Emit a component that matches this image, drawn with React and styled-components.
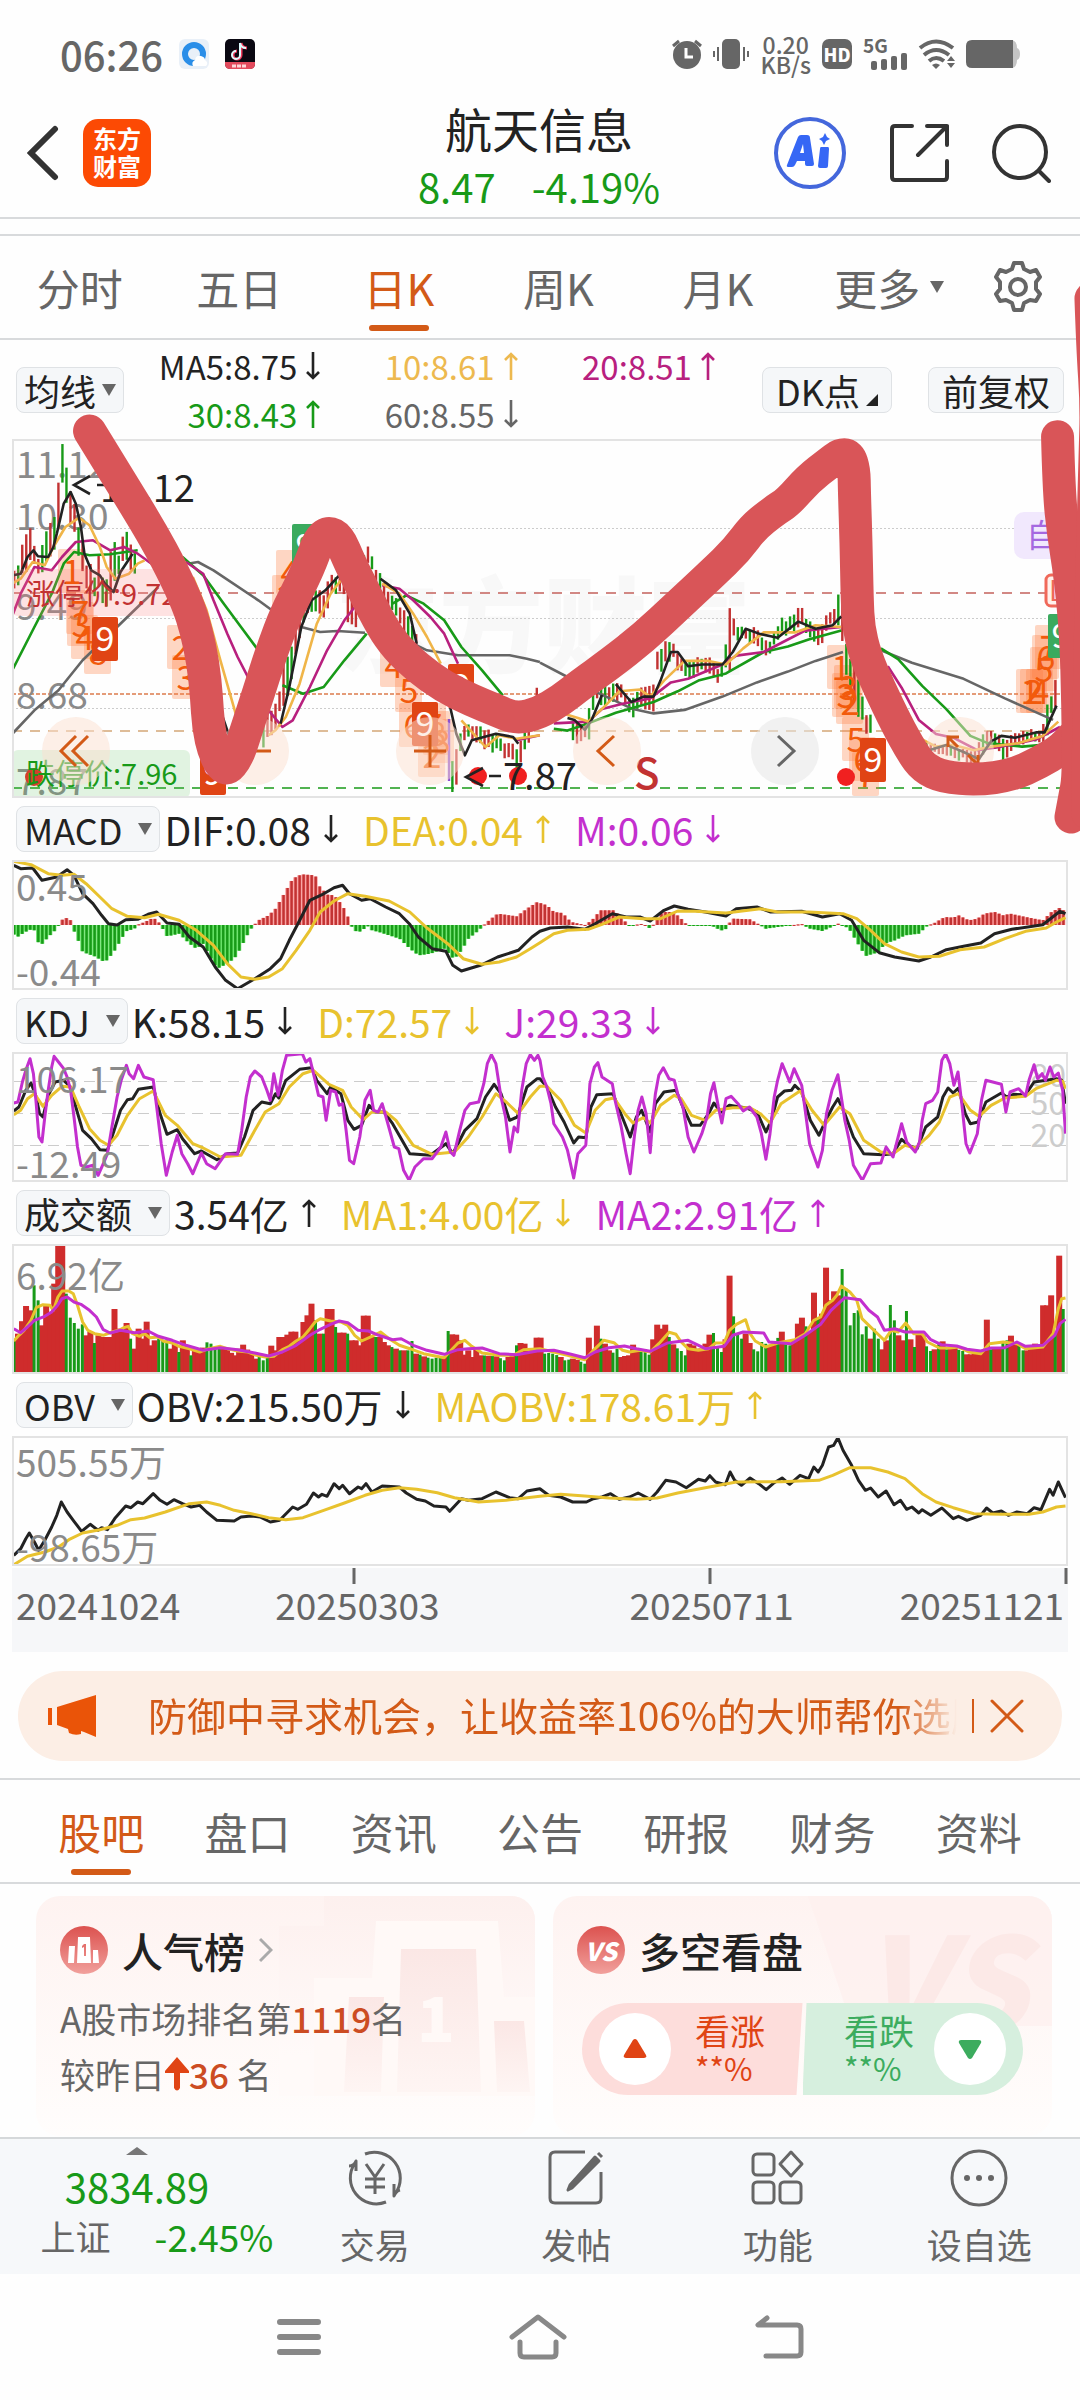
import React from 'react';
import styled, { createGlobalStyle } from 'styled-components';

const GlobalStyle = createGlobalStyle`
    *{
        box-sizing: border-box;
    }
    body{
        margin: 0;
        background: #fefefe;
        color: #222;
        font-family: "Noto Sans CJK SC", "Noto Sans", sans-serif;
    }
    button{
        font: inherit;
        color: inherit;
        background: none;
        border: 0;
        padding: 0;
        margin: 0;
        cursor: pointer;
    }
    h1, h2, p{
        margin: 0;
        font-weight: 400;
    }
    svg{
        display: block;
        flex: none;
    }
`;

const GREEN = '#189a18';
const RED = '#c23232';
const ORANGE = '#d35a17';
const YELLOW = '#e8c22e';
const PURPLE = '#c32fce';
const INK = '#222';

/* ---------- chart data ---------- */

// "x,y" pairs; a trailing g marks a falling day, | starts a new segment
const toPoints = (text, x0, y0, ky) =>
    text.trim().split(/\s+/).map(pair => {
        const [, x, y, g] = pair.match(/(\d+),(\d+)(g?)/);
        return { x: x0 + x / 2.904, y: y0 + y / ky, g: g === 'g' };
    });

const series = (left, right, y0, yRight = y0, kRight = 3) => [
    ...toPoints(left, 0, y0, 3),
    ...toPoints(right, 540, yRight, kRight),
];

const toPath = points => 'M' + points.map(p => `${p.x.toFixed(1)} ${p.y.toFixed(1)}`).join('L');

const toSmooth = points => {
    let d = `M${points[0].x} ${points[0].y}`;
    for (let i = 1; i < points.length - 1; i++) {
        const a = points[i];
        const b = points[i + 1];
        d += `Q${a.x} ${a.y} ${(a.x + b.x) / 2} ${(a.y + b.y) / 2}`;
    }
    const end = points[points.length - 1];
    return d + `L${end.x} ${end.y}`;
};

const valueAt = (points, x) => {
    if (x <= points[0].x) return points[0].y;
    for (let i = 1; i < points.length; i++) {
        const a = points[i - 1];
        const b = points[i];
        if (x <= b.x) return a.y + ((b.y - a.y) * (x - a.x)) / (b.x - a.x || 1);
    }
    return points[points.length - 1].y;
};

const noise = i => {
    const n = Math.sin(i * 12.9898) * 43758.5453;
    return n - Math.floor(n);
};

const DAYS = Array.from({ length: 262 }, (_, i) => ({ i, x: 14 + i * 4.02 }));

const macd = {
    dif: series(
        '40,205 60,215 95,213 122,250 165,240 195,218 215,235 240,290 270,320 295,355 315,380 340,384 365,368 400,367 430,352 455,345 485,378 520,382 550,420 590,450 625,510 655,550 690,575 740,545 785,515 815,485 840,430 865,380 900,310 935,293 970,272 995,265 1015,290 1050,310 1075,305 1120,330 1160,350 1190,382 1215,420 1255,455 1295,463 1315,505 1340,522 1400,503 1445,480 1505,460 1545,420 1568,403',
        '30,393 80,390 130,397 160,380 210,350 250,360 290,360 320,372 360,340 390,327 430,337 480,345 540,357 570,335 630,330 670,345 760,343 820,360 870,350 905,370 940,430 985,467 1030,480 1100,492 1135,480 1180,458 1230,448 1280,438 1320,410 1370,397 1460,383 1510,343 1526,350', -64),
    dea: series(
        '40,193 90,203 140,230 180,235 215,232 250,260 290,300 325,335 370,358 420,362 460,352 520,370 570,400 620,445 660,500 700,540 740,547 780,540 820,515 860,460 900,400 930,345 970,312 1010,290 1060,298 1130,312 1190,345 1240,393 1300,440 1345,485 1400,502 1450,495 1500,480 1540,455 1568,437',
        '40,410 80,400 140,397 180,382 230,360 300,365 350,365 400,342 450,343 540,348 640,335 690,345 780,345 880,350 920,365 960,400 1000,440 1050,465 1100,480 1160,478 1220,458 1290,450 1350,425 1410,403 1470,393 1500,375 1526,362', -64),
    bars: series(
        '40,412 50,420 65,410 85,398 100,400 110,435 120,443 140,420 160,400 170,384 178,370 190,362 205,370 212,395 225,425 240,465 280,480 295,492 310,490 330,465 350,430 365,403 390,395 400,383 420,375 445,362 460,375 475,400 485,418 520,410 550,440 570,455 590,440 610,480 630,515 650,505 680,485 695,460 710,430 725,400 738,384 750,370 780,355 800,335 825,290 850,245 875,232 915,235 925,265 950,293 970,295 990,320 1005,345 1018,384 1030,402 1050,404 1065,385 1080,400 1100,405 1160,425 1190,455 1215,475 1250,470 1290,455 1318,487 1340,460 1360,425 1390,400 1405,384 1420,370 1445,350 1500,358 1530,335 1560,315',
        '0,318 20,325 40,345 65,348 90,375 130,384 150,370 175,340 215,340 235,362 260,386 300,380 320,395 335,375 355,345 385,345 405,360 425,382 440,386 500,387 515,395 535,403 548,380 560,365 610,367 635,382 655,395 690,390 720,386 760,381 780,394 820,402 850,388 865,380 885,387 900,400 920,435 945,477 985,465 1000,440 1030,430 1060,415 1100,410 1125,386 1145,378 1175,360 1200,362 1215,355 1245,370 1270,365 1290,350 1320,345 1345,355 1365,350 1410,360 1460,370 1485,345 1510,332 1526,345', -64),
};

const kdj = {
    k: series(
        '40,942 55,930 75,880 90,858 105,900 115,950 125,960 140,895 160,855 185,850 205,870 220,930 240,1000 265,1025 290,1058 312,1060 330,1005 350,940 370,908 385,905 402,877 445,870 465,950 485,1012 515,998 530,1025 565,1070 585,1062 630,1088 660,1070 690,1068 710,1020 735,940 760,915 785,920 800,890 810,903 830,850 870,817 905,812 920,850 950,890 960,870 990,890 1010,970 1028,997 1050,985 1072,925 1090,945 1115,945 1140,980 1190,1070 1250,1075 1295,1040 1315,1070 1350,1000 1385,965 1410,900 1435,862 1455,890 1480,970 1502,960 1530,870 1560,845',
        '0,845 20,870 45,930 70,975 98,1038 112,1020 133,1022 148,930 165,893 212,890 235,950 262,1020 280,960 295,940 320,1005 335,920 360,885 395,880 415,930 440,985 465,985 490,950 505,918 525,945 550,925 600,933 630,945 656,1005 672,970 690,900 710,882 730,880 740,865 760,885 785,970 810,1015 830,970 850,930 865,905 885,950 910,1020 940,1070 995,1073 1025,1070 1050,1027 1070,1045 1095,1055 1120,990 1155,960 1170,900 1185,873 1200,888 1215,873 1235,950 1250,980 1272,975 1295,915 1340,888 1355,900 1375,892 1410,893 1435,855 1500,845 1515,850 1526,920', -256),
    d: series(
        '40,953 60,940 80,905 100,890 125,928 150,895 180,868 205,870 230,930 260,995 290,1030 315,1045 340,1015 370,955 405,905 445,882 480,955 515,985 560,1040 590,1053 640,1080 700,1075 740,1000 770,945 810,920 840,870 880,830 910,820 955,862 995,880 1020,930 1055,968 1080,945 1120,945 1150,970 1200,1045 1255,1072 1320,1065 1360,1020 1400,960 1440,890 1470,915 1505,950 1540,900 1568,868',
        '20,868 60,910 100,985 133,1008 160,940 190,908 215,903 250,955 270,978 300,962 320,978 350,925 390,895 410,905 440,955 480,970 510,940 560,932 610,932 640,950 668,978 700,920 755,882 790,940 825,985 870,930 900,950 940,1030 990,1065 1025,1070 1060,1045 1090,1053 1130,1015 1160,975 1190,900 1215,890 1250,940 1275,958 1310,925 1350,903 1410,898 1440,875 1500,850 1518,853 1526,875', -256),
    j: series(
        '40,918 52,915 65,855 75,820 87,785 97,830 105,920 113,1020 122,1035 130,960 140,880 150,810 157,778 170,795 185,815 195,840 205,880 215,960 225,1050 235,1105 250,1110 270,1105 285,1135 300,1100 312,1070 325,990 340,900 352,850 367,805 375,830 388,845 402,805 418,840 445,848 455,930 468,1040 483,1135 500,1065 515,1015 528,1070 545,1100 560,1130 585,1068 600,1100 625,1115 655,1070 690,1072 702,1000 715,900 727,840 740,822 760,840 775,880 785,910 795,830 808,895 820,820 832,775 878,770 888,795 900,785 915,850 925,895 938,900 947,970 960,880 975,885 985,925 995,920 1005,1000 1015,1090 1027,1100 1045,1020 1060,910 1075,880 1085,940 1098,945 1110,920 1125,975 1145,1050 1158,1055 1172,1120 1188,1150 1205,1110 1230,1085 1255,1085 1280,1050 1295,1005 1308,1065 1318,1075 1335,1000 1350,940 1365,920 1390,915 1405,860 1415,800 1427,773 1440,800 1455,900 1468,960 1481,1065 1493,990 1503,1005 1515,880 1528,800 1540,773 1552,790 1562,775',
        '0,790 8,840 20,870 32,920 40,980 65,1020 80,1060 98,1143 110,1070 133,1045 145,860 158,810 168,797 180,840 210,860 218,910 235,985 250,1070 262,1130 275,1010 285,940 296,900 308,950 320,1067 328,960 335,890 345,835 358,812 375,845 390,850 400,890 415,930 430,1020 447,1065 470,1010 485,960 495,890 505,857 518,930 528,978 540,905 555,898 575,920 590,942 608,930 630,960 643,1010 656,1087 668,1010 680,900 690,850 703,800 725,855 738,815 760,865 770,940 783,1040 807,1110 820,1060 832,950 848,880 865,833 875,900 885,970 898,1030 910,1105 936,1150 960,1100 990,1098 1005,1050 1025,1080 1050,980 1065,1035 1090,1065 1102,1035 1110,970 1120,920 1140,910 1155,885 1167,790 1178,770 1190,800 1202,865 1214,825 1225,920 1237,1040 1248,1068 1270,1010 1282,910 1295,850 1340,862 1353,945 1365,885 1390,875 1410,897 1420,850 1435,803 1445,845 1458,830 1468,850 1481,810 1492,840 1505,828 1518,880 1526,1010', -256),
};

const turnover = {
    bars: series(
        '40,462g 55,440 75,357 90,370 97,295g 108,340g 120,415 130,355 150,375 163,290 174,174 180,174 190,320g 202,392g 213,408g 225,425g 236,412g 248,445 260,435 272,468g 283,445 300,450 315,450 329,366 341,425 352,435 365,408 376,455g 388,485 400,425 411,455 423,404 435,475 445,460 457,455g 470,460g 480,460g 492,485 505,470 515,495g 527,460 540,485 560,505g 570,490 583,495 597,466g 608,470g 630,480g 650,480 680,505 703,473 730,500 740,515 755,510g 770,520g 780,510g 793,476 805,490 817,450 840,443 852,434 865,455 875,455 885,405 897,385 909,350 921,400g 933,440 945,440g 957,366 969,370 980,420g 992,437 1004,440g 1015,440g 1027,460 1040,475 1050,490 1062,386 1074,430g 1085,450 1100,450 1112,465 1125,475 1150,485 1165,490g 1180,490g 1200,462g 1213,500 1240,512g 1250,515g 1280,510g 1295,510 1305,432g 1318,442 1330,443 1342,460 1352,503 1364,490 1376,510 1388,485 1400,505 1440,508 1468,520g 1480,510 1492,505 1504,475g 1515,468 1527,470 1540,490 1550,490 1562,452',
        '0,452 12,500g 25,498g 40,500g 60,510 75,520g 85,518g 100,515 130,530g 143,452 155,490 167,416 179,455g 190,470 202,490 215,497g 225,485g 235,510 255,505 272,473 283,490 300,492g 318,503g 328,457 341,413 352,425 365,413 376,450g 388,472 400,484g 411,492g 422,505g 434,470 446,475 458,485 470,485 480,470 492,443 503,438g 515,480g 527,495g 538,457 550,266 562,388g 573,440g 585,455g 596,440 608,468 620,487g 631,493g 645,465g 665,475 680,470 702,434 714,472g 725,475g 735,460 747,410 759,392 771,418g 783,435 794,317 806,390g 818,380 829,242 841,340 852,313 864,325 875,246g 887,305g 899,415g 910,378g 922,370g 934,442g 945,418g 957,455 968,425g 980,455g 992,487 1003,460 1014,354g 1026,400g 1038,445 1050,460 1062,372g 1073,457 1085,480g 1096,440 1108,445 1120,478g 1132,492g 1145,487 1165,463 1185,487g 1200,482 1225,492g 1245,502 1275,500 1285,490 1293,398 1305,487g 1330,480 1352,460g 1364,446 1376,472 1388,474g 1400,490g 1412,490 1440,470 1455,480 1467,355 1479,325 1491,440g 1502,206 1514,366g 1526,360g', -58),
    ma1: series(
        '40,462 55,445 70,430 90,400 105,362 125,353 145,355 155,370 168,330 180,312 200,312 213,320 225,355 240,405 255,430 275,440 300,445 325,435 345,430 360,422 372,418 385,440 405,448 420,440 435,452 460,450 475,463 500,468 520,478 550,485 580,495 600,487 640,478 660,485 690,492 720,495 745,505 770,510 795,508 820,488 840,478 860,462 880,450 900,425 915,405 930,395 960,402 990,405 1010,415 1030,445 1050,462 1080,448 1105,435 1130,455 1160,475 1190,485 1230,500 1290,512 1310,490 1330,468 1350,460 1370,478 1400,498 1450,505 1490,505 1520,488 1568,485',
        '40,495 80,505 130,518 155,490 185,460 215,467 240,490 260,495 290,490 320,495 345,470 375,436 395,442 410,465 430,485 460,490 490,485 510,468 535,467 550,430 570,412 597,398 610,440 625,462 655,480 690,468 740,458 770,440 795,400 815,390 830,355 850,340 862,325 875,297 900,315 920,340 935,395 955,415 980,440 1000,460 1020,430 1040,435 1062,408 1085,440 1110,440 1125,465 1160,483 1190,483 1215,480 1245,495 1280,500 1305,470 1345,465 1385,470 1410,485 1460,480 1490,440 1505,365 1515,335 1526,333', -58),
    ma2: series(
        '40,425 60,437 80,420 100,400 130,388 150,375 165,358 180,335 195,330 215,345 235,352 260,370 280,390 300,428 320,438 350,430 390,437 430,432 460,448 500,460 540,475 590,490 640,482 690,488 740,498 780,507 820,495 860,475 900,445 930,427 960,412 985,402 1010,407 1040,430 1070,432 1100,445 1140,458 1165,455 1200,475 1240,490 1290,502 1330,488 1360,485 1400,483 1450,500 1500,503 1560,492',
        '40,490 90,502 130,512 160,495 200,482 245,477 280,485 320,493 370,468 430,460 480,485 535,478 560,445 590,435 650,438 665,465 730,470 770,445 815,412 845,370 885,332 930,338 955,370 980,390 1000,430 1030,425 1060,435 1115,435 1135,458 1165,473 1210,477 1240,487 1280,492 1310,483 1350,482 1385,465 1410,478 1460,475 1495,445 1510,410 1526,397', -58),
};

const obv = {
    line: series(
        '40,1105 60,1085 75,1055 85,1038 100,1065 112,1090 130,1060 150,1020 165,985 178,945 195,975 215,1003 237,1033 262,1012 285,1030 295,1022 312,1028 335,992 365,957 380,962 400,945 415,950 445,920 465,940 485,952 505,938 530,950 555,960 580,955 600,975 630,1000 680,1002 700,990 730,987 755,990 785,1005 812,1000 850,960 865,967 890,952 910,918 925,930 935,922 950,928 970,890 985,905 995,895 1015,920 1040,900 1050,905 1063,890 1080,915 1110,897 1160,900 1180,918 1210,937 1235,942 1260,957 1295,960 1306,973 1340,935 1360,940 1400,935 1440,915 1480,932 1505,935 1530,912 1568,905',
        '25,925 60,930 95,945 135,945 155,935 180,930 205,920 230,937 260,930 285,918 320,937 340,915 365,880 395,885 425,902 460,877 480,882 493,866 510,885 538,893 552,855 565,880 585,895 610,873 635,890 657,908 680,887 703,873 725,892 755,865 780,875 795,840 808,855 820,835 838,780 853,775 865,752 880,790 905,835 925,880 945,910 960,903 982,930 1005,912 1028,953 1047,940 1065,967 1080,960 1100,978 1110,968 1135,985 1167,963 1200,995 1215,988 1240,1000 1280,985 1297,963 1315,978 1340,972 1360,985 1385,975 1415,980 1435,962 1455,968 1480,907 1490,925 1505,885 1526,932', -250),
    ma: series(
        '40,1133 80,1108 130,1095 170,1080 200,1058 240,1038 290,1028 340,1015 380,998 420,993 480,975 550,950 600,945 640,955 680,970 730,980 780,992 830,998 880,992 940,970 1000,948 1060,925 1110,910 1160,902 1210,907 1270,917 1320,932 1390,945 1470,940 1568,928',
        '60,922 130,927 200,933 280,937 340,933 400,918 480,902 570,885 700,884 810,880 850,865 900,842 960,842 1010,855 1060,875 1110,920 1150,945 1200,962 1260,980 1340,982 1420,982 1460,975 1500,960 1526,957', -250),
};

const priceSegments = (left, right) => [
    ...left.split('|').map(s => toPoints(s, 0, 330, 3)),
    ...right.split('|').map(s => toPoints(s, 540, 280, 2.8)),
];

const averages = [
    ['#666', priceSegments(
        '38,1218 100,1150 170,1090 240,1000 340,900 400,840 460,780|545,710 575,705 620,730 750,820 790,850|875,900 930,915 980,912 1060,917|1200,950 1240,970 1330,985 1480,985 1530,995 1568,1005',
        '0,1080 80,1120 170,1165 270,1210 330,1222 420,1212 530,1175 630,1135 720,1105 800,1075 880,1050|990,1045 1080,1080 1230,1125 1350,1180 1490,1240')],
    [GREEN, priceSegments(
        '38,1025 100,900 150,800 185,710 215,675 260,685 320,682 400,670|530,690 590,745 650,830 700,900 750,970|820,1075 880,1100 940,1080 1000,1000 1065,920|1140,830 1180,805 1230,830 1290,880 1340,960 1400,1030 1460,1105',
        '40,1265 80,1270 140,1250 220,1220 330,1190 400,1160 460,1130 540,1110 650,1050 720,1035 780,1015 875,990|990,1040 1040,1070 1110,1145 1180,1210 1250,1285 1300,1305 1400,1315 1460,1310 1510,1285')],
    ['#b8207e', priceSegments(
        '38,860 60,800 100,720 150,730 180,690 220,645 270,640 320,670 360,660 400,680 440,710|540,705 590,740 620,820 660,920 690,990 725,1060|780,1150 820,1200 850,1180 900,1080 950,970 1000,880 1030,840|1110,775 1160,785 1200,820 1250,870 1290,920 1330,1010|1500,1240 1568,1225',
        '40,1250 140,1245 180,1210 240,1195 320,1180 380,1135 430,1125 530,1085 570,1060 650,1050 720,1015 770,990 875,980|1010,1090 1050,1150 1100,1240 1150,1280 1200,1290 1270,1325 1340,1315 1440,1295 1510,1260')],
    ['#f0b548', priceSegments(
        '38,768 60,755 95,705 130,715 155,660 190,600 230,572 260,595 290,660 310,720 335,755 375,740 400,710 420,700|560,750 600,850 640,1000 690,1180|780,1225 800,1210 830,1170 870,1070 920,890 960,800 990,760|1110,770 1160,800 1200,860 1240,930 1280,1010|1340,1180 1410,1260 1450,1225 1500,1235 1568,1225',
        '60,1220 110,1235 140,1245 190,1200 230,1160 290,1155 320,1175 360,1130 420,1075 490,1075 540,1085 590,1040 650,995 740,995 800,975 875,980|1100,1290 1150,1315 1200,1310 1260,1325 1310,1315 1390,1305 1460,1285 1505,1245')],
    [INK, priceSegments(
        '38,745 60,740 80,690 97,670 110,688 140,690 155,660 165,620 185,530 205,495 220,530 235,600 245,680 265,730 290,745 305,770 330,795 350,735 385,680|640,1150 665,1225|815,1190 840,1080 875,900 905,820 945,790 985,745|1105,755 1150,790 1190,860 1210,950|1305,1130 1325,1220 1350,1285 1370,1240 1440,1220 1490,1230 1505,1250',
        '80,1235 100,1240 130,1268 150,1240 180,1170|220,1140 265,1190 300,1175 330,1175 350,1130 380,1050 400,1050 430,1090 470,1085 530,1085 560,1050 597,985 640,1000 690,1010 750,965 800,985 850,975 875,950|1130,1325 1180,1310 1230,1330 1275,1350 1310,1300 1340,1285 1380,1290 1440,1275 1465,1275 1500,1200')],
];

const highs = series(
    '38,740 60,670 75,600 85,580 97,640 110,690 125,640 140,575 155,560 167,450 178,345 188,338 200,450 212,500 225,560 235,600 250,700 262,700 275,740 285,660 300,750 315,740 327,590 340,690 352,650 363,590 375,640 388,640 400,650 760,1140 775,1140 790,1150 803,1120 815,1060 827,950 840,990 850,920 860,850 875,830 890,800 905,790 920,770 935,800 950,760 965,740 1000,730 1012,740 1025,830 1040,830 1052,680 1062,660 1072,645 1095,730 1108,740 1120,770 1135,790 1150,800 1165,830 1180,860 1195,880 1210,920 1303,1180 1315,1290 1327,1250 1338,1200 1365,1190 1400,1190 1450,1220 1480,1250 1502,1250 1520,1220 1540,1150 1560,1070',
    '0,1120 90,1240 107,1240 130,1240 145,1170 165,1050 200,1140 225,1120 250,1170 270,1170 290,1130 315,1140 330,1130 340,1030 355,1030 370,1010 385,1020 400,1050 415,1060 440,1070 470,1060 490,1050 515,1090 535,1070 550,870 562,950 575,970 600,980 620,980 650,1000 665,1020 680,990 700,950 720,960 745,910 760,920 780,960 800,970 815,980 830,940 850,930 862,890 873,830 885,990 920,1100 945,1210 970,1210 1120,1300 1160,1305 1200,1310 1230,1320 1260,1320 1290,1260 1310,1270 1350,1280 1380,1270 1430,1265 1455,1265 1470,1190 1485,1170 1500,1100', 330, 280, 2.8);

const lows = series(
    '38,790 60,760 75,740 85,700 97,710 110,730 125,760 140,700 155,660 167,600 178,490 188,500 200,560 212,600 225,670 235,730 250,780 262,800 275,800 285,770 300,830 315,860 327,770 340,750 352,730 363,720 375,740 388,740 400,720 760,1250 775,1250 790,1250 803,1200 815,1140 827,1120 840,1100 850,1050 860,980 875,920 890,880 905,860 920,860 935,880 950,850 965,800 1000,800 1012,920 1025,920 1040,900 1052,850 1062,720 1072,700 1095,780 1108,790 1120,850 1135,850 1150,860 1165,900 1180,960 1195,970 1210,1000 1303,1360 1315,1380 1327,1410 1338,1250 1365,1240 1400,1250 1450,1270 1480,1300 1502,1330 1520,1290 1540,1210 1560,1110',
    '0,1170 90,1290 107,1305 130,1280 145,1270 165,1180 200,1190 225,1180 250,1210 270,1225 290,1190 315,1220 330,1235 340,1100 355,1100 370,1070 385,1070 400,1100 415,1110 440,1120 470,1100 490,1100 515,1135 535,1115 550,1060 562,1010 575,1010 600,1010 620,1030 650,1050 665,1060 680,1040 700,1000 720,1000 745,990 760,980 780,1010 800,1020 815,1045 830,990 850,970 862,960 873,990 885,1080 920,1220 945,1280 970,1270 1120,1330 1160,1335 1200,1350 1230,1350 1260,1370 1290,1320 1310,1310 1350,1350 1380,1310 1430,1300 1455,1300 1470,1300 1485,1230 1500,1220', 330, 280, 2.8);

// no candle where the samples are far apart
const hasCandle = x => {
    const next = highs.findIndex(p => p.x >= x);
    return next > 0 && highs[next].x - highs[next - 1].x < 20;
};

const scribbles = [
    [
        ...toPoints('260,312 360,480 440,615 500,730 545,830 570,910 590,1010 600,1110 605,1200 622,1280 655,1335 690,1290 715,1210 750,1100 790,970 830,860 870,780 905,700 925,640 952,614 985,632 1015,705 1060,800 1110,900 1150,960 1210,1020 1290,1080 1370,1120 1440,1150 1500,1175', 0, 330, 3),
        ...toPoints('0,1220 60,1185 120,1140 200,1085 300,1010 400,920 500,830 570,765 620,700 680,655 720,630 780,565 840,520 870,498 898,498 912,540 913,600 918,750 921,900 925,980 945,1060 985,1150 1035,1250 1080,1330 1115,1375 1170,1400 1270,1408 1370,1395 1450,1360 1510,1325 1545,1290', 540, 280, 2.8),
    ],
    toPoints('1503,447 1507,600 1520,720 1540,840 1556,1000 1562,1200 1564,1400 1552,1460 1542,1512', 540, 280, 2.8),
    toPoints('1600,60 1605,200 1616,360 1612,500 1606,700 1598,1000 1590,1500', 540, 280, 2.8),
];

const hints = [
    [72, 574, '1'], [80, 615, '7'], [81, 627, '3'], [85, 640, '4'], [98, 655, '8'],
    [181, 650, '2'], [186, 680, '3'], [290, 575, '4'], [286, 600, '3'],
    [394, 668, '4'], [409, 693, '5'], [413, 728, '6'], [433, 728, '7'], [437, 736, '8'], [441, 744, '8'], [432, 758, '2'],
    [841, 670, '1'], [848, 690, '3'], [846, 698, '3'], [850, 705, '2'], [856, 742, '5'], [863, 762, '6'], [866, 777, '7'],
    [1030, 694, '1'], [1034, 694, '2'], [1040, 694, '4'], [1044, 672, '5'], [1046, 660, '6'], [1049, 650, '7'],
];

const nines = [
    [92, 620, '#e04414'], [200, 754, '#e04414'], [292, 527, '#3aaa5e'],
    [448, 667, '#e04414'], [412, 705, '#e04414'], [860, 741, '#e04414'], [1048, 617, '#3aaa5e'],
];

/* ---------- small drawings ---------- */

const Arrow = ({ up }) => (
    <svg width="16" height="30" viewBox="0 0 16 30" fill="none" stroke="currentColor" strokeWidth="2.6">
        {up ? <path d="M8 29V3M2 9l6-6 6 6" /> : <path d="M8 1v26M2 21l6 6 6-6" />}
    </svg>
);

const Caret = () => (
    <svg width="14" height="12" viewBox="0 0 14 12" fill="#666"><path d="M0 0h14L7 12z" /></svg>
);

const StatusIcons = () => (
    <>
        <svg width="30" height="30" viewBox="0 0 30 30" fill="#666">
            <circle cx="15" cy="16" r="14" />
            <path d="M1 7l6-5M29 7l-6-5" stroke="#666" strokeWidth="3" />
            <path d="M14 9v9h7" fill="none" stroke="#fff" strokeWidth="3" />
        </svg>
        <svg width="36" height="30" viewBox="0 0 36 30" fill="#666">
            <rect x="9" width="18" height="30" rx="5" />
            <path d="M1 12v6M5 8v14M31 8v14M35 12v6" stroke="#666" strokeWidth="2" />
        </svg>
        <Speed><span>0.20</span><span>KB/s</span></Speed>
        <HdBadge>HD</HdBadge>
        <Signal>
            <span>5G</span>
            <svg width="36" height="18" viewBox="0 0 36 18" fill="#666">
                <rect y="9" width="6" height="9" rx="2" /><rect x="10" y="7" width="6" height="11" rx="2" />
                <rect x="20" y="4" width="6" height="14" rx="2" /><rect x="30" y="1" width="6" height="17" rx="2" />
            </svg>
        </Signal>
        <svg width="37" height="30" viewBox="0 0 37 30" fill="none" stroke="#666" strokeWidth="4">
            <path d="M2 9q16-13 33 0M6 16q12-10 25 0M11 22q7-6 15 0" />
            <path d="M14 26q4-3 8 0l-4 4z" fill="#666" stroke="none" />
            <path d="M29 22l4-5 4 5zM29 24h8l-4 5z" fill="#666" stroke="none" />
        </svg>
        <svg width="54" height="28" viewBox="0 0 54 28">
            <path d="M46 0q5 1 5 8 3 1 3 6t-3 6q0 7-5 8z" fill="#c4c4c4" />
            <path d="M6 0h41v28H6q-6 0-6-6V6q0-6 6-6z" fill="#666" />
        </svg>
    </>
);

const AppIcons = () => (
    <>
        <svg width="30" height="30" viewBox="0 0 30 30">
            <rect width="30" height="30" rx="6" fill="#e9f0f8" />
            <circle cx="15" cy="15" r="9" fill="none" stroke="#2a8ee8" strokeWidth="6" />
            <path d="M14 27q-2-4 2-6 1-5 6-4 4 1 4 4 4 3 1 6z" fill="#fff" />
        </svg>
        <svg width="30" height="30" viewBox="0 0 30 30">
            <rect width="30" height="30" rx="5" fill="#0a0812" />
            <path d="M0 23h30v2q0 5-5 5H5q-5 0-5-5z" fill="#e34a5d" />
            <path d="M16 4v12a4 4 0 1 1-4-4M16 4q1 5 6 5" fill="none" stroke="#ef3a5d" strokeWidth="3" />
            <path d="M15 4v12a4 4 0 1 1-4-4M15 4q1 5 6 5" fill="none" stroke="#dffcff" strokeWidth="2" />
            <path d="M7 27h14" stroke="#ffd5d8" strokeWidth="3" strokeDasharray="4 1" />
        </svg>
    </>
);

const Gear = () => (
    <svg width="54" height="54" viewBox="0 0 54 54" fill="none" stroke="#666" strokeWidth="4" strokeLinejoin="round">
        <path d="M23 3h8l2 6 6 3 6-2 4 7-4 5v7l4 5-4 7-6-1-6 3-2 7h-8l-2-7-6-3-6 1-4-7 4-5v-7l-4-5 4-7 6 2 6-3z" />
        <circle cx="27" cy="27" r="8" />
    </svg>
);

/* ---------- charts ---------- */

const PriceChart = () => (
    <Chart viewBox="12 442 1056 359" $ratio="1056 / 359" role="img" aria-label="日K">
        <text x="335" y="668" fontSize="104" fontWeight="900" fill="#f8f8f8">东方财富</text>
        <path d="M12 531.5h1056M12 621.5h1056M12 711.5h1056" stroke="#ccc" strokeWidth="1" strokeDasharray="2 2" />
        <path d="M12 596h1056" stroke="#c4615c" strokeWidth="1.5" strokeDasharray="10 8" />
        <path d="M12 697h1056" stroke="#dc7b4c" strokeWidth="1.5" strokeDasharray="4 2" />
        <path d="M12 734h1056" stroke="#d3a777" strokeWidth="1.5" strokeDasharray="10 8" />
        <path d="M12 791h1056" stroke={GREEN} strokeWidth="1.5" strokeDasharray="10 8" />
        {[['11.12', 481], ['10.30', 533], ['9.49', 623], ['8.68', 712], ['7.87', 798]].map(([label, y]) => (
            <ScaleText key={label} x="16" y={y}>{label}</ScaleText>
        ))}
        {hints.map(([x, y]) => (
            <rect key={`${x}-${y}`} x={x - 14} y={y - 22} width="27" height="44" rx="2" fill="#ff7a3c" fillOpacity="0.3" />
        ))}
        {DAYS.filter(d => hasCandle(d.x)).map(({ i, x }) => {
            const top = valueAt(highs, x);
            const low = valueAt(lows, x);
            const cut = (low - top) * 0.3;
            return (
                <rect key={i} x={x - 1} y={top + cut * noise(i)} width="2.4"
                    height={low - top - cut * noise(i + 400)} fill={noise(i + 90) > 0.48 ? RED : GREEN} />
            );
        })}
        <path d="M449 722v62" stroke="#8a4fd0" strokeWidth="2.4" />
        {averages.map(([color, segments]) => segments.map((points, i) => (
            <path key={color + i} d={toPath(points)} fill="none" stroke={color} strokeWidth="2.6" strokeLinejoin="round" />
        )))}
        <rect x="12" y="572" width="178" height="47" rx="6" fill="#ff8080" fillOpacity="0.22" />
        <text x="26" y="608" fontSize="29" fill={RED}>涨停价:9.72</text>
        {hints.map(([x, y, n]) => (
            <text key={`${x}-${y}`} x={x} y={y + 13} fontSize="34" textAnchor="middle" fill="#f25a0c">{n}</text>
        ))}
        {nines.map(([x, y, fill]) => (
            <g key={`${x}-${y}`}>
                <rect x={x} y={y} width="26" height="44" rx="2" fill={fill} />
                <text x={x + 13} y={y + 34} fontSize="34" textAnchor="middle" fill="#fff">9</text>
            </g>
        ))}
        <circle cx="34" cy="780" r="9" fill="#f02020" />
        <circle cx="478" cy="779" r="9" fill="#f02020" />
        <circle cx="518" cy="779" r="9" fill="#f02020" />
        <circle cx="846" cy="780" r="9" fill="#f02020" />
        <rect x="12" y="753" width="178" height="48" rx="6" fill="#5cc45c" fillOpacity="0.18" />
        <text x="26" y="788" fontSize="29" fill={GREEN}>跌停价:7.96</text>
        <g fill="none" stroke={INK} strokeWidth="2.6">
            <path d="M90 479l-16 9 16 9M97 488h13M483 771l-17 9 17 9M489 779h12" />
        </g>
        <text x="100" y="505" fontSize="38" fill={INK}>11.12</text>
        <text x="503" y="793" fontSize="38" fill={INK}>7.87</text>
        <text x="634" y="792" fontSize="42" fontWeight="500" fill={RED}>S</text>
        <rect x="1014" y="515" width="60" height="47" rx="10" fill="#f1e8fd" />
        <text x="1026" y="550" fontSize="32" fill="#a568e0">自</text>
        <rect x="1046" y="578" width="30" height="31" rx="5" fill="#fff1ed" stroke="#f0695a" strokeWidth="3" />
        <text x="1049" y="604" fontSize="28" fill="#f0695a">D</text>
    </Chart>
);

const Scribble = () => (
    <Marker viewBox="12 442 1056 359" aria-hidden="true">
        {scribbles.map((points, i) => <path key={i} d={toSmooth(points)} />)}
    </Marker>
);

const Histogram = ({ points }) => {
    const zero = 64;
    return DAYS.map(({ i, x }) => {
        const y = valueAt(points, x);
        const down = y > zero;
        const top = Math.min(y, zero);
        const height = Math.max(Math.abs(y - zero), 1);
        return (
            <g key={i}>
                <rect x={x - 2} y={top} width="4.1" height={height} fill={down ? '#63e063' : '#f79090'} />
                <rect x={x - 1} y={top} width="2.4" height={height} fill={down ? GREEN : RED} />
            </g>
        );
    });
};

const Turnover = ({ points }) => {
    const bars = DAYS.map(({ i, x }) => {
        const near = points.reduce((a, b) => (Math.abs(b.x - x) < Math.abs(a.x - x) ? b : a));
        const close = Math.abs(near.x - x) < 2.1;
        const down = close ? near.g : noise(i) > 0.6;
        return { i, x, y: (close ? near.y : valueAt(points, x)), down };
    });
    return [false, true].map(down => bars.filter(b => b.down === down).map(({ i, x, y }) => (
        <rect key={i} x={down ? x - 1.5 : x - 3} y={y} width={down ? 3 : 6} height={128 - y} fill={down ? GREEN : '#cf2c2c'} />
    )));
};

const Line = ({ points, color }) => (
    <path d={toPath(points)} fill="none" stroke={color} strokeWidth="3" strokeLinejoin="round" />
);

const indicators = [
    {
        name: 'MACD',
        values: [['DIF:0.08', INK, false], ['DEA:0.04', YELLOW, true], ['M:0.06', PURPLE, false]],
        labels: [['0.45', 40], ['-0.44', 125]],
        plot: (
            <>
                <Histogram points={macd.bars} />
                <Line points={macd.dif} color={INK} />
                <Line points={macd.dea} color={YELLOW} />
            </>
        ),
    },
    {
        name: 'KDJ',
        values: [['K:58.15', INK, false], ['D:72.57', YELLOW, false], ['J:29.33', PURPLE, false]],
        labels: [['106.17', 40], ['-12.49', 125]],
        plot: (
            <>
                <path d="M12 28.5h1056M12 60.5h1056M12 92.5h1056" stroke="#ccc" strokeWidth="1" strokeDasharray="11 7" />
                <g fontSize="32" fill="#ccc" textAnchor="end">
                    <text x="1066" y="34">80</text>
                    <text x="1066" y="62">50</text>
                    <text x="1066" y="94">20</text>
                </g>
                <Line points={kdj.k} color={INK} />
                <Line points={kdj.d} color={YELLOW} />
                <Line points={kdj.j} color={PURPLE} />
            </>
        ),
    },
    {
        name: '成交额',
        values: [['3.54亿', INK, true], ['MA1:4.00亿', YELLOW, false], ['MA2:2.91亿', PURPLE, true]],
        labels: [['6.92亿', 45]],
        plot: (
            <>
                <Turnover points={turnover.bars} />
                <Line points={turnover.ma1} color={YELLOW} />
                <Line points={turnover.ma2} color={PURPLE} />
            </>
        ),
    },
    {
        name: 'OBV',
        values: [['OBV:215.50万', INK, false], ['MAOBV:178.61万', YELLOW, true]],
        labels: [['505.55万', 40], ['-98.65万', 125]],
        plot: (
            <>
                <Line points={obv.line} color={INK} />
                <Line points={obv.ma} color={YELLOW} />
            </>
        ),
    },
];

const legend = [
    ['MA5:8.75', INK, false], ['10:8.61', '#edb94f', true], ['20:8.51', '#b8207e', true],
    ['30:8.43', GREEN, true], ['60:8.55', '#666', false],
];

const chartButtons = [
    [76, 'M76 739l-15 15 15 15M88 739l-15 15 15 15', '最早', false],
    [255, 'M239 754h32', '缩小', false],
    [430, 'M414 754h32M430 738v32', '放大', false],
    [607, 'M614 739l-16 15 16 15', '向左', false],
    [785, 'M778 739l16 15-16 15', '向右', true],
    [960, 'M948 750v-10h11M948 740l10 10M978 758v10h-11M978 768l-10-10', '全屏', false],
];

const actions = [
    ['交易', (
        <>
            <path d="M19 5a26 26 0 0 1 30 40M40 53A26 26 0 0 1 9 14M3 17q5 0 7-5v10M48 35v12q2-5 6-6" />
            <path d="M20 15l9 13 9-13M29 28v17M19 30h20M19 38h20" />
        </>
    )],
    ['发帖', (
        <>
            <path d="M38 3H8q-5 0-5 5v41q0 5 5 5h41q5 0 5-5V23" />
            <path d="M48 8l4 4-27 27-4 2 2-5zM51 4l4 4" fill="#666" />
        </>
    )],
    ['功能', (
        <>
            <rect x="4" y="5" width="21" height="21" rx="4" />
            <rect x="4" y="33" width="21" height="21" rx="4" />
            <rect x="31" y="33" width="21" height="21" rx="4" />
            <path d="M42 3l11 12-11 12-11-12z" />
        </>
    )],
    ['设自选', (
        <>
            <circle cx="29" cy="29" r="27" />
            <g fill="#666" stroke="none">
                <circle cx="17" cy="29" r="3" /><circle cx="29" cy="29" r="3" /><circle cx="41" cy="29" r="3" />
            </g>
        </>
    )],
];

function App(){
    return(
        <Page>
            <GlobalStyle />
            <StatusBar>
                <StatusGroup $gap={16}>
                    <Clock>06:26</Clock>
                    <AppIcons />
                </StatusGroup>
                <StatusGroup $gap={11}>
                    <StatusIcons />
                </StatusGroup>
            </StatusBar>

            <Header>
                <HeaderSide $gap={24}>
                    <button aria-label="返回">
                        <svg width="32" height="56" viewBox="0 0 32 56" fill="none" stroke="#333" strokeWidth="6" strokeLinecap="round">
                            <path d="M28 4L4 28l24 24" />
                        </svg>
                    </button>
                    <Logo><span>东方</span><span>财富</span></Logo>
                </HeaderSide>
                <Title>
                    <h1>航天信息</h1>
                    <p><span>8.47</span><span>-4.19%</span></p>
                </Title>
                <HeaderSide $gap={42} $end>
                    <button aria-label="Ai">
                        <svg width="74" height="74" viewBox="0 0 74 74">
                            <circle cx="37" cy="37" r="34" fill="#fff" stroke="#4467dc" strokeWidth="4" />
                            <g fill="#3667f5">
                                <path fillRule="evenodd" d="M14 49l11-28q1-2 3-2h6q3 0 3 3l4 26q0 2-2 2h-5q-2 0-2-2v-3h-8l-2 4q-1 2-3 2h-3q-3 0-2-2zM27 37h4l-1-9z" />
                                <path d="M48 31h7q1 0 1 2l-1 17q0 2-2 2h-6q-2 0-2-2l2-17q0-2 1-2z" />
                                <path d="M52 17l2 4 3 2-4 2-2 4-2-4-3-2 4-2z" />
                            </g>
                        </svg>
                    </button>
                    <button aria-label="分享">
                        <svg width="60" height="60" viewBox="0 0 60 60" fill="none" stroke="#333" strokeWidth="4" strokeLinecap="round" strokeLinejoin="round">
                            <path d="M23 3H6q-3 0-3 3v48q0 3 3 3h49q3 0 3-3V38M38 3h20v19M58 3L29 32" />
                        </svg>
                    </button>
                    <button aria-label="搜索">
                        <svg width="60" height="60" viewBox="0 0 60 60" fill="none" stroke="#333" strokeWidth="4" strokeLinecap="round">
                            <circle cx="29" cy="29" r="26" /><path d="M48 48l10 10" />
                        </svg>
                    </button>
                </HeaderSide>
            </Header>

            <PeriodTabs>
                {['分时', '五日', '日K', '周K', '月K'].map(t => <Tab key={t} $active={t === '日K'}>{t}</Tab>)}
                <Tab $grow={1.15}>更多<Caret /></Tab>
                <GearButton aria-label="设置"><Gear /></GearButton>
            </PeriodTabs>

            <LegendBar>
                <Chip>均线<Caret /></Chip>
                <Legend>
                    {legend.map(([label, color, up]) => (
                        <Value key={label} $color={color} $small>{label}<Arrow up={up} /></Value>
                    ))}
                </Legend>
                <LegendButtons>
                    <Chip $wide>DK点
                        <svg width="12" height="12" viewBox="0 0 12 12"><path d="M12 0v12H0z" fill="#222" /></svg>
                    </Chip>
                    <Chip $wide>前复权</Chip>
                </LegendButtons>
            </LegendBar>

            <Charts>
                <PriceArea>
                    <PriceChart />
                    {chartButtons.map(([x, d, label, gray]) => (
                        <RoundButton key={label} aria-label={label} $left={(x - 12) / 10.56} $gray={gray}>
                            <svg width="68" height="68" viewBox={`${x - 34} 720 68 68`} fill="none" stroke="currentColor" strokeWidth="3">
                                <path d={d} />
                            </svg>
                        </RoundButton>
                    ))}
                    <Scribble />
                </PriceArea>

                {indicators.map(({ name, values, labels, plot }) => (
                    <section key={name}>
                        <IndicatorBar>
                            <Chip $spread>{name}<Caret /></Chip>
                            {values.map(([label, color, up]) => (
                                <Value key={label} $color={color}>{label}<Arrow up={up} /></Value>
                            ))}
                        </IndicatorBar>
                        <Chart viewBox="12 -1 1056 130" $ratio="1056 / 130" role="img" aria-label={name}>
                            {plot}
                            {labels.map(([label, y]) => <ScaleText key={label} x="16" y={y}>{label}</ScaleText>)}
                        </Chart>
                    </section>
                ))}

                <DateAxis>
                    <svg viewBox="12 0 1056 16" width="100%" stroke="#666" strokeWidth="3">
                        <path d="M354 0v16M710 0v16M1066 0v16" />
                    </svg>
                    <Dates>
                        <span>20241024</span><span>20250303</span><span>20250711</span><span>20251121</span>
                    </Dates>
                </DateAxis>
            </Charts>

            <Notice>
                <svg width="48" height="42" viewBox="0 0 48 42" fill="#ea5408">
                    <path d="M0 13h4v17H0zM9 12l39-12v42l-12-5-3-1v3q-6 2-12-1l-1-4-11-4z" />
                </svg>
                <NoticeText href="#notice">防御中寻求机会，让收益率106%的大师帮你选股</NoticeText>
                <CloseButton aria-label="关闭">
                    <svg width="34" height="34" viewBox="0 0 34 34" stroke={ORANGE} strokeWidth="3" strokeLinecap="round">
                        <path d="M2 2l30 30M32 2L2 32" />
                    </svg>
                </CloseButton>
            </Notice>

            <InfoTabs>
                {['股吧', '盘口', '资讯', '公告', '研报', '财务', '资料'].map(t => <Tab key={t} $active={t === '股吧'}>{t}</Tab>)}
            </InfoTabs>

            <Cards>
                <Card>
                    <CardArt viewBox="0 0 260 200">
                        <path d="M4 30h45V0h211v200H4z" fill="url(#artFade)" />
                        <path d="M39 82h58l4-57h122l6 76h31v99H39z" fill="#fff9f7" />
                        <g fill="url(#barFade)">
                            <path d="M74 101h35l-3 95H69z" /><path d="M126 53h75l5 143h-84z" /><path d="M219 125h30l6 71h-33z" />
                        </g>
                        <text x="142" y="146" fontSize="62" fontWeight="900" fill="#fff9f7">1</text>
                        <defs>
                            <linearGradient id="artFade" x1="0" y1="0" x2="0" y2="1">
                                <stop offset="0" stopColor="#fdf0ee" /><stop offset="0.8" stopColor="#fffaf9" />
                            </linearGradient>
                            <linearGradient id="barFade" x1="0" y1="0" x2="0" y2="1">
                                <stop offset="0" stopColor="#fbe7e5" /><stop offset="1" stopColor="#fef5f3" />
                            </linearGradient>
                        </defs>
                    </CardArt>
                    <CardTitle $space={16}>
                        <Medal>
                            <svg width="32" height="26" viewBox="0 0 32 26" fill="#fff">
                                <path fillRule="evenodd" d="M1 9h6l-1 17H0zM10 0h12l1 26H9zM14 9v2l2-1v9h2V7h-2zM25 13h5l1 13h-6z" />
                            </svg>
                        </Medal>
                        人气榜
                        <svg width="14" height="26" viewBox="0 0 14 26" fill="none" stroke="#aaa" strokeWidth="3"><path d="M1 2l11 11L1 24" /></svg>
                    </CardTitle>
                    <Rank>A股市场排名第<b>1119</b>名</Rank>
                    <Rank>
                        较昨日
                        <svg width="24" height="34" viewBox="0 0 24 34" fill="#e04414"><path d="M12 0l12 14v2h-9v15q-3 5-6 0V16H0v-2z" /></svg>
                        <b>36</b>&nbsp;名
                    </Rank>
                </Card>
                <Card>
                    <CardArt viewBox="0 0 260 200">
                        <path d="M16 0h244v130H60z" fill="#fdf0ee" fillOpacity="0.7" />
                        <text x="70" y="136" fontSize="130" fontWeight="900" fontStyle="italic" fill="#fce9e7">VS</text>
                    </CardArt>
                    <CardTitle $space={29}><Medal><i>VS</i></Medal>多空看盘</CardTitle>
                    <Votes>
                        <Vote>
                            <VoteDot><svg width="24" height="20" viewBox="0 0 24 20" fill="#e04414"><path d="M10 1q2-2 4 0l9 15q1 3-2 3H3q-3 0-2-3z" /></svg></VoteDot>
                            <span>看涨<br /><small>**%</small></span>
                        </Vote>
                        <Vote $down>
                            <span>看跌<br /><small>**%</small></span>
                            <VoteDot><svg width="24" height="20" viewBox="0 0 24 20" fill="#3cac5e"><path d="M10 19q2 2 4 0l9-15q1-3-2-3H3Q0 1 1 4z" /></svg></VoteDot>
                        </Vote>
                    </Votes>
                </Card>
            </Cards>

            <ActionBar>
                <IndexButton>
                    <svg width="22" height="8" viewBox="0 0 22 8" fill="#777"><path d="M0 8l11-8 11 8z" /></svg>
                    <strong>3834.89</strong>
                    <span><em>上证</em>-2.45%</span>
                </IndexButton>
                {actions.map(([label, icon]) => (
                    <Action key={label}>
                        <svg width="58" height="58" viewBox="0 0 58 58" fill="none" stroke="#666" strokeWidth="3" strokeLinejoin="round">{icon}</svg>
                        {label}
                    </Action>
                ))}
            </ActionBar>

            <SystemNav>
                <button aria-label="菜单">
                    <svg width="46" height="44" viewBox="0 0 46 44" stroke="#888" strokeWidth="6" strokeLinecap="round"><path d="M4 7h38M4 22h38M4 37h38" /></svg>
                </button>
                <button aria-label="主页">
                    <svg width="60" height="46" viewBox="0 0 60 46" fill="none" stroke="#888" strokeWidth="5" strokeLinecap="round" strokeLinejoin="round">
                        <path d="M4 23L30 3l26 20M12 28v11q0 4 4 4h28q4 0 4-4V28" />
                    </svg>
                </button>
                <button aria-label="后退">
                    <svg width="50" height="44" viewBox="0 0 50 44" fill="none" stroke="#888" strokeWidth="5" strokeLinecap="round" strokeLinejoin="round">
                        <path d="M13 3L4 10h39q4 0 4 4v23q0 4-4 4H12" />
                    </svg>
                </button>
            </SystemNav>
        </Page>
    );
}

const Page = styled.main`
    min-height: 100vh;
    display: flex;
    flex-direction: column;
    overflow: hidden;
`;

const StatusBar = styled.div`
    height: 99px;
    padding: 8px 60px 0;
    display: flex;
    justify-content: space-between;
    align-items: center;
    color: #666;
`;

const StatusGroup = styled.div`
    display: flex;
    align-items: center;
    gap: ${p => p.$gap}px;
`;

const Clock = styled.time`
    font-size: 40px;
    line-height: 44px;
    font-weight: 500;
`;

const Speed = styled.span`
    display: flex;
    flex-direction: column;
    align-items: center;
    font-size: 23px;
    line-height: 20px;
    font-weight: 500;
`;

const HdBadge = styled.span`
    width: 30px;
    height: 30px;
    border-radius: 7px;
    background: #666;
    color: #fff;
    font-size: 18px;
    line-height: 30px;
    font-weight: 900;
    text-align: center;
`;

const Signal = styled.span`
    display: flex;
    flex-direction: column;
    align-items: flex-end;
    width: 44px;
    font-size: 19px;
    line-height: 14px;
    font-weight: 700;
    span{
        align-self: flex-start;
    }
`;

const Header = styled.header`
    height: 120px;
    padding: 0 29px 0 27px;
    border-bottom: 2px solid #d8dadc;
    display: grid;
    grid-template-columns: 1fr auto 1fr;
    align-items: center;
`;

const HeaderSide = styled.div`
    display: flex;
    align-items: center;
    justify-content: ${p => (p.$end ? 'flex-end' : 'flex-start')};
    gap: ${p => p.$gap}px;
    padding-bottom: 14px;
`;

const Logo = styled.div`
    width: 68px;
    height: 68px;
    padding-top: 5px;
    border-radius: 15px;
    background: #fc4a04;
    color: #fff;
    display: flex;
    flex-direction: column;
    align-items: center;
    font-size: 24px;
    line-height: 28px;
    font-weight: 700;
`;

const Title = styled.div`
    padding-bottom: 6px;
    text-align: center;
    h1{
        font-size: 47px;
        line-height: 58px;
    }
    p{
        display: flex;
        justify-content: center;
        gap: 36px;
        color: ${GREEN};
        font-size: 40px;
        line-height: 58px;
    }
`;

const PeriodTabs = styled.nav`
    height: 106px;
    margin-top: 15px;
    padding-right: 25px;
    border: solid #d8dadc;
    border-width: 2px 0;
    display: flex;
`;

const Tab = styled.button`
    position: relative;
    flex: ${p => p.$grow || 1};
    display: flex;
    justify-content: center;
    align-items: center;
    gap: 10px;
    font-size: 43px;
    color: ${p => (p.$active ? ORANGE : '#666')};
    &::after{
        content: '';
        display: ${p => (p.$active ? 'block' : 'none')};
        position: absolute;
        bottom: 7px;
        left: calc(50% - 30px);
        width: 60px;
        height: 6px;
        border-radius: 3px;
        background: ${ORANGE};
    }
`;

const GearButton = styled.button`
    width: 74px;
    display: flex;
    justify-content: center;
    align-items: center;
`;

const LegendBar = styled.div`
    height: 99px;
    padding: 0 16px;
    display: flex;
    align-items: center;
`;

const Chip = styled.button`
    height: 46px;
    padding: 0 ${p => (p.$wide ? 13 : 7)}px;
    border: 1px solid #dfe2e5;
    border-radius: 8px;
    background: #f5f7f9;
    display: flex;
    align-items: center;
    gap: ${p => (p.$spread ? 16 : 6)}px;
    font-size: 36px;
    line-height: 42px;
    white-space: nowrap;
    > svg{
        align-self: ${p => (p.$wide ? 'flex-end' : 'center')};
        margin-bottom: ${p => (p.$wide ? 6 : 0)}px;
    }
`;

const Legend = styled.div`
    flex: 1;
    display: grid;
    grid-template-columns: repeat(3, 1fr);
    justify-items: end;
`;

const LegendButtons = styled.div`
    display: flex;
    gap: 36px;
    margin-left: 46px;
`;

const Value = styled.span`
    display: flex;
    align-items: center;
    gap: ${p => (p.$small ? 8 : 12)}px;
    color: ${p => p.$color};
    font-size: ${p => (p.$small ? 33 : 39)}px;
    line-height: 48px;
    white-space: nowrap;
`;

const Charts = styled.div`
    padding: 0 12px;
`;

const PriceArea = styled.div`
    position: relative;
`;

const Chart = styled.svg`
    width: 100%;
    aspect-ratio: ${p => p.$ratio};
    outline: 2px solid #e3e3e3;
    outline-offset: -2px;
`;

const ScaleText = styled.text`
    font-size: 37px;
    fill: #8a8a8a;
`;

const Marker = styled.svg`
    position: absolute;
    inset: 0;
    width: 100%;
    overflow: visible;
    fill: none;
    stroke: #d95558;
    stroke-width: 33;
    stroke-linecap: round;
    stroke-linejoin: round;
    pointer-events: none;
`;

const RoundButton = styled.button`
    position: absolute;
    bottom: 13px;
    left: ${p => p.$left}%;
    margin-left: -34px;
    border-radius: 50%;
    background: ${p => (p.$gray ? 'rgba(230, 230, 230, .55)' : 'rgba(252, 224, 208, .5)')};
    color: ${p => (p.$gray ? '#666' : ORANGE)};
`;

const IndicatorBar = styled.div`
    height: 62px;
    padding-left: 4px;
    display: flex;
    align-items: center;
    gap: 24px;
    ${Chip}{
        margin-right: -20px;
    }
`;

const DateAxis = styled.div`
    height: 84px;
    margin-top: 2px;
    background: #f6f7f9;
`;

const Dates = styled.div`
    display: grid;
    grid-template-columns: 164fr 356fr 356fr 180fr;
    color: #666;
    font-size: 37px;
    line-height: 40px;
    text-align: center;
    span:first-child{
        padding-left: 4px;
    }
    span:last-child{
        padding-right: 4px;
        text-align: right;
    }
`;

const Notice = styled.div`
    height: 90px;
    margin: 19px 18px 17px;
    padding: 0 38px 0 30px;
    border-radius: 45px;
    background: #fceee5;
    display: flex;
    align-items: center;
`;

const NoticeText = styled.a`
    flex: 1;
    min-width: 0;
    margin: 0 15px 0 52px;
    padding-bottom: 4px;
    overflow: hidden;
    white-space: nowrap;
    text-decoration: none;
    color: ${ORANGE};
    font-size: 39px;
    line-height: 56px;
    mask-image: linear-gradient(to right, #000 93%, transparent);
`;

const CloseButton = styled.button`
    padding-left: 16px;
    border-left: 2px solid ${ORANGE};
`;

const InfoTabs = styled.nav`
    height: 106px;
    padding: 0 28px;
    border: solid #d8dadc;
    border-width: 2px 0;
    display: flex;
`;

const Cards = styled.div`
    flex: 1;
    padding: 12px 28px 0 36px;
    display: grid;
    grid-template-columns: 1fr 1fr;
    gap: 18px;
`;

const Card = styled.section`
    position: relative;
    height: 240px;
    padding: 30px 24px 0;
    border-radius: 24px;
    overflow: hidden;
    background: linear-gradient(#fef3f1, #fffdfc);
`;

const CardArt = styled.svg`
    position: absolute;
    top: 0;
    right: 0;
    width: 260px;
    height: 200px;
`;

const CardTitle = styled.h2`
    position: relative;
    margin-bottom: ${p => p.$space}px;
    display: flex;
    align-items: center;
    gap: 14px;
    font-size: 41px;
    line-height: 48px;
    font-weight: 500;
`;

const Medal = styled.span`
    width: 48px;
    height: 48px;
    border-radius: 50%;
    background: linear-gradient(#dc524f, #f1a09c);
    color: #fff;
    display: flex;
    justify-content: center;
    align-items: center;
    font-size: 25px;
    font-weight: 900;
`;

const Rank = styled.p`
    position: relative;
    display: flex;
    align-items: center;
    color: #666;
    font-size: 35px;
    line-height: 56px;
    b{
        color: #cc4c22;
        font-weight: 500;
    }
`;

const Votes = styled.div`
    position: relative;
    height: 92px;
    margin: 0 5px;
    border-radius: 46px;
    overflow: hidden;
    display: flex;
`;

const Vote = styled.button`
    flex: 1;
    display: flex;
    align-items: center;
    justify-content: ${p => (p.$down ? 'flex-end' : 'flex-start')};
    gap: ${p => (p.$down ? 20 : 24)}px;
    padding: 0 17px;
    text-align: left;
    font-size: 35px;
    line-height: 36px;
    color: ${p => (p.$down ? '#3cac5e' : '#e04414')};
    background: ${p => (p.$down ? '#d6efde' : '#fddddb')};
    clip-path: ${p => (p.$down ? 'polygon(4px 0, 100% 0, 100% 100%, 0 100%)' : 'polygon(0 0, 100% 0, calc(100% - 6px) 100%, 0 100%)')};
    small{
        font-size: 31px;
    }
`;

const VoteDot = styled.span`
    width: 72px;
    height: 72px;
    border-radius: 50%;
    background: #fff;
    display: flex;
    justify-content: center;
    align-items: center;
`;

const ActionBar = styled.nav`
    height: 137px;
    border-top: 2px solid #d5d8da;
    background: #f6f8fa;
    display: flex;
`;

const IndexButton = styled.button`
    flex: 1.36;
    padding-top: 8px;
    display: flex;
    flex-direction: column;
    align-items: center;
    color: ${GREEN};
    font-size: 37px;
    line-height: 50px;
    strong{
        padding-top: 6px;
        font-size: 40px;
        font-weight: 400;
    }
    span{
        display: flex;
        gap: 44px;
        padding-left: 40px;
    }
    em{
        color: #666;
        font-size: 35px;
        font-style: normal;
    }
`;

const Action = styled.button`
    flex: 1;
    display: flex;
    flex-direction: column;
    align-items: center;
    gap: 12px;
    padding-top: 10px;
    color: #666;
    font-size: 35px;
    line-height: 50px;
`;

const SystemNav = styled.nav`
    height: 126px;
    padding: 0 276px;
    display: flex;
    justify-content: space-between;
    align-items: center;
    background: #fefefe;
`;

export default App;
